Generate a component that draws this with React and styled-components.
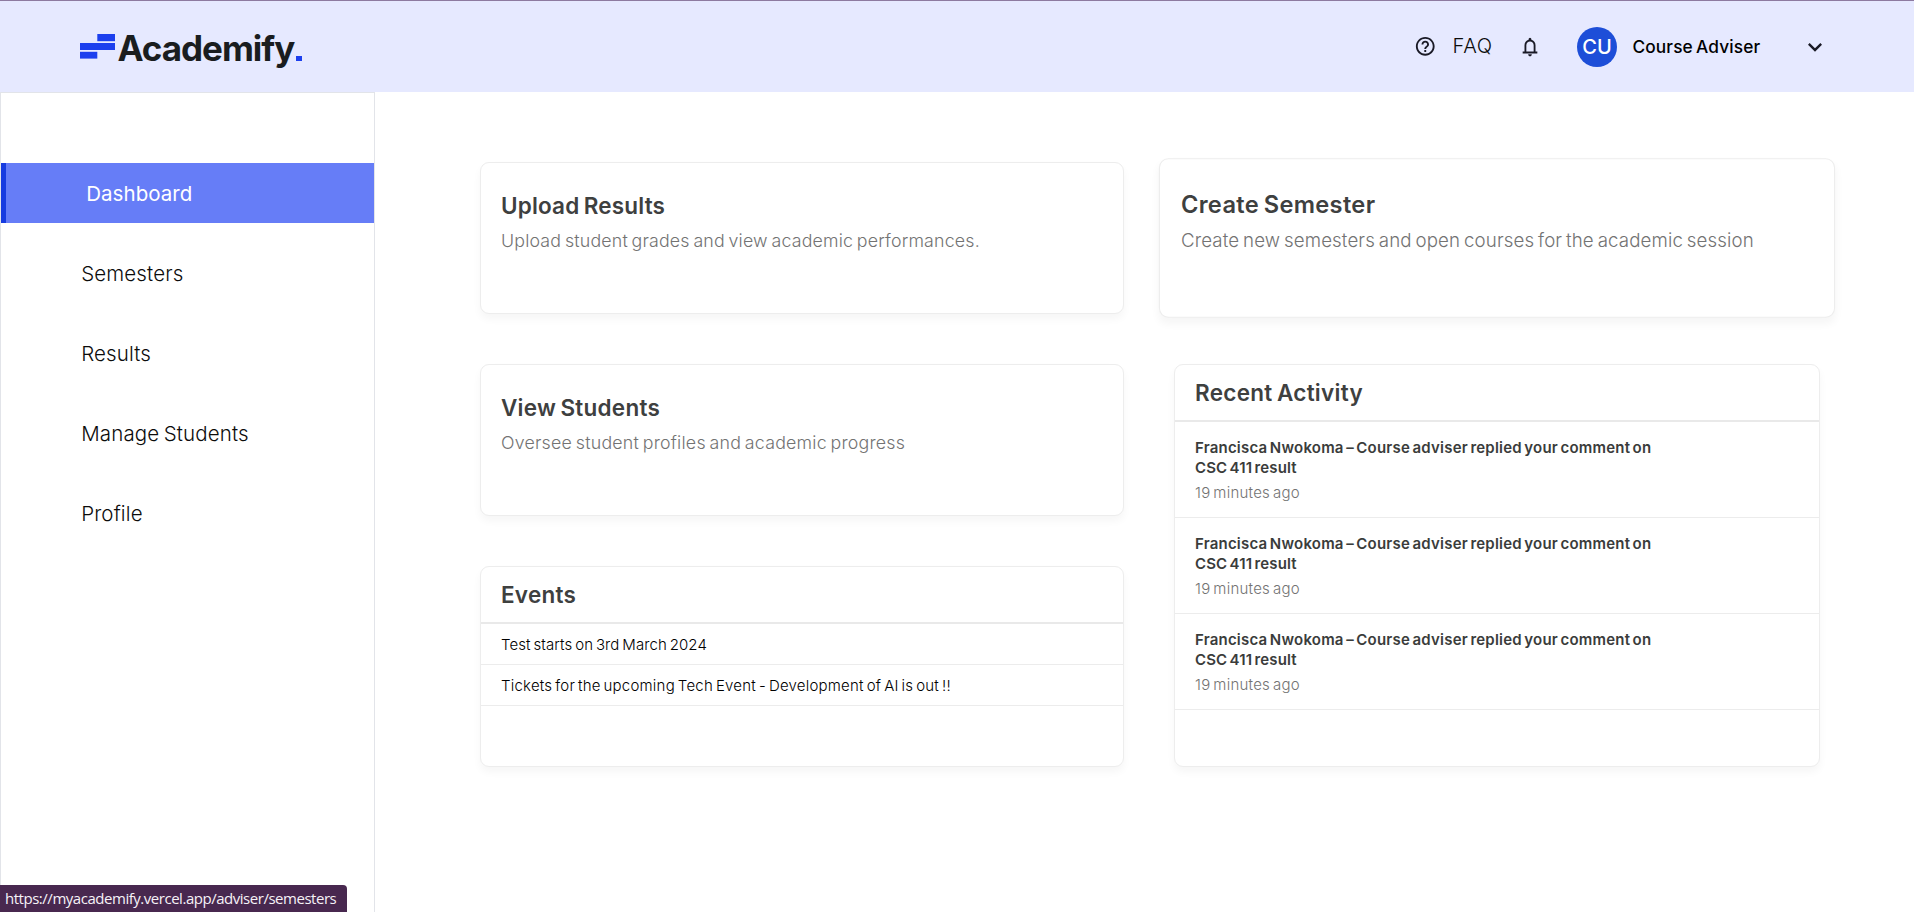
import React from 'react';
import styled, { createGlobalStyle, css } from 'styled-components';
import { MdHelpOutline, MdExpandMore } from 'react-icons/md';

const GlobalStyle = createGlobalStyle`
  *, *::before, *::after { box-sizing: border-box; }
  body {
    margin: 0;
    background: #fff;
    color: #0c0c0c;
    font-family: Inter, "Liberation Sans", sans-serif;
    word-spacing: -1.5px;
    overflow: hidden;
  }
  h1, h2, h3, p, ul { margin: 0; padding: 0; list-style: none; }
`;

const Page = styled.div`
  display: flex;
  flex-direction: column;
  height: 100vh;
`;

const Header = styled.header`
  display: flex;
  align-items: center;
  justify-content: space-between;
  flex: none;
  height: 92px;
  padding: 0 85px 0 80px;
  border-top: 1px solid #8d7aa0;
  background: #e6e9ff;
`;

const Logo = styled.div`
  display: flex;
  align-items: center;
  color: #1a1d1f;

  svg { display: block; }
`;

const Wordmark = styled.span`
  margin: 3px 0 0 2.5px;
  font-size: 35px;
  line-height: 42px;
  font-weight: 700;
  letter-spacing: -1.02px;
`;

const Dot = styled.span`
  align-self: flex-end;
  width: 5.5px;
  height: 5.5px;
  margin: 0 0 8px 2px;
  background: #1c3fee;
`;

const HeaderTools = styled.div`
  display: flex;
  align-items: center;
  color: #1a1a26;

  svg { display: block; flex: none; }
`;

const FaqLabel = styled.span`
  width: 66.5px;
  margin: -2px 0 0 16.5px;
  color: #0c0c0c;
  font-size: 20.2px;
  line-height: 24px;
  font-weight: 300;
  letter-spacing: 0.6px;
`;

const Avatar = styled.span`
  display: flex;
  align-items: center;
  justify-content: center;
  width: 40px;
  height: 40px;
  margin: 1px 15.5px 0 36px;
  border-radius: 50%;
  background: #1d4ed8;
  color: #fff;
  font-size: 20px;
  font-weight: 500;
`;

const UserName = styled.span`
  width: 168.5px;
  color: #000;
  font-size: 17.3px;
  line-height: 24px;
  font-weight: 500;
  letter-spacing: 0.12px;
`;

const Body = styled.div`
  display: flex;
  flex: 1;
  min-height: 0;
`;

const Sidebar = styled.nav`
  display: flex;
  flex-direction: column;
  gap: 20px;
  flex: none;
  width: 375px;
  padding-top: 70px;
  border: 1px solid #e2e4e9;
  border-bottom: 0;
`;

const NavItem = styled.a`
  display: flex;
  align-items: center;
  height: 60px;
  padding: 0 0 0 80.2px;
  font-size: 20.5px;
  font-weight: 300;
  letter-spacing: 0.14px;

  ${({ $active }) => $active && css`
    padding-top: 1px;
    border-left: 5px solid #173be0;
    background: #667df7;
    color: #fff;
    font-weight: 400;
    letter-spacing: 0.05px;
  `}
`;

const Main = styled.main`
  display: grid;
  grid-template-columns: 644px 646px;
  grid-template-rows: 152px 152px 201px;
  gap: 50px;
  flex: 1;
  padding: 70px 0 0 105px;
`;

const Card = styled.section`
  border: 1px solid #ededed;
  border-radius: 9px;
  background: #fff;
  box-shadow: 0 5px 8px rgba(0, 0, 0, 0.04);
`;

const LinkCard = styled(Card)`
  padding: 28.5px 20px 0;

  ${({ $raised }) => $raised && css`
    justify-self: center;
    width: 644px;
    transform: scale(1.05);
  `}
`;

const ActivityCard = styled(Card)`
  grid-column: 2;
  grid-row: 2 / span 2;
`;

const CardTitle = styled.h2`
  color: #3e403f;
  font-size: 22.5px;
  line-height: 28px;
  font-weight: 600;
  letter-spacing: ${({ $tracking = 0.24 }) => $tracking}px;
`;

const CardText = styled.p`
  margin-top: 9px;
  color: #737373;
  font-size: 17.8px;
  line-height: 24px;
  font-weight: 300;
  letter-spacing: ${({ $tracking }) => $tracking}px;
  white-space: nowrap;
`;

const CardHeader = styled.div`
  display: flex;
  align-items: center;
  height: 57px;
  padding: 0 20px;
  border-bottom: 2px solid #e9e9e9;
`;

const EventRow = styled.li`
  display: flex;
  align-items: center;
  height: 41px;
  padding: 0 20px;
  border-bottom: 1px solid #ececec;
  color: #000;
  font-size: 15px;
  font-weight: 300;
  letter-spacing: ${({ $tracking }) => $tracking}px;
`;

const ActivityRow = styled.li`
  height: 96px;
  padding: 16px 20px 0;
  border-bottom: 1px solid #ececec;
`;

const ActivityText = styled.p`
  width: 480px;
  color: #3a3c3b;
  font-size: 15px;
  line-height: 20px;
  font-weight: 600;
  letter-spacing: 0.21px;
`;

const CourseCode = styled.span`
  display: block;
  letter-spacing: 0.12px;
`;

const ActivityTime = styled.p`
  margin-top: 5px;
  color: #737373;
  font-size: 15px;
  line-height: 20px;
  font-weight: 300;
  letter-spacing: 0.24px;
`;

const StatusBar = styled.div`
  position: fixed;
  left: 0;
  bottom: 0;
  width: 347px;
  height: 27px;
  padding-left: 5px;
  border-top-right-radius: 4px;
  background: #48284f;
  color: #f6f2f7;
  font: 15px/27px "Open Sans", sans-serif;
  letter-spacing: -0.47px;
  white-space: nowrap;
`;

function LogoMark() {
  return (
    <svg width="35" height="25" viewBox="0 0 35 25" fill="#1c3fee">
      <rect x="17.3" y="0" width="17.7" height="7.2" />
      <rect x="0" y="9" width="35" height="7" />
      <rect x="0" y="17.8" width="17.3" height="6.8" />
    </svg>
  );
}

function BellIcon() {
  return (
    <svg width="22" height="22" viewBox="0 0 24 24" fill="currentColor">
      <path d="M4 19v-2h2v-7q0-2.075 1.25-3.687T10.5 4.2v-.7q0-.625.438-1.062T12 2t1.063.438T13.5 3.5v.7q2 .5 3.25 2.113T18 10v7h2v2zm8 3q-.825 0-1.412-.587T10 20h4q0 .825-.587 1.413T12 22m-4-5h8v-7q0-1.65-1.175-2.825T12 6T9.175 7.175T8 10z" />
    </svg>
  );
}

const navItems = ['Dashboard', 'Semesters', 'Results', 'Manage Students', 'Profile'];

const events = [
  { text: 'Test starts on 3rd March 2024', tracking: 0.1 },
  { text: 'Tickets for the upcoming Tech Event - Development of AI is out !!', tracking: 0.22 },
];

const activities = [1, 2, 3].map((id) => ({
  id,
  text: 'Francisca Nwokoma – Course adviser replied your comment on',
  course: 'CSC 411 result',
  time: '19 minutes ago',
}));

export default function App() {
  return (
    <Page>
      <GlobalStyle />
      <Header>
        <Logo>
          <LogoMark />
          <Wordmark>Academify</Wordmark>
          <Dot />
        </Logo>
        <HeaderTools>
          <MdHelpOutline size={22.5} />
          <FaqLabel>FAQ</FaqLabel>
          <BellIcon />
          <Avatar>CU</Avatar>
          <UserName>Course Adviser</UserName>
          <MdExpandMore size={28} />
        </HeaderTools>
      </Header>
      <Body>
        <Sidebar>
          {navItems.map((label, i) => (
            <NavItem key={label} $active={i === 0}>{label}</NavItem>
          ))}
        </Sidebar>
        <Main>
          <LinkCard>
            <CardTitle $tracking={0.17}>Upload Results</CardTitle>
            <CardText $tracking={0.18}>Upload student grades and view academic performances.</CardText>
          </LinkCard>
          <LinkCard $raised>
            <CardTitle $tracking={0.31}>Create Semester</CardTitle>
            <CardText $tracking={0.13}>Create new semesters and open courses for the academic session</CardText>
          </LinkCard>
          <LinkCard>
            <CardTitle>View Students</CardTitle>
            <CardText $tracking={0.22}>Oversee student profiles and academic progress</CardText>
          </LinkCard>
          <ActivityCard>
            <CardHeader><CardTitle $tracking={0.28}>Recent Activity</CardTitle></CardHeader>
            <ul>
              {activities.map(({ id, text, course, time }) => (
                <ActivityRow key={id}>
                  <ActivityText>{text} <CourseCode>{course}</CourseCode></ActivityText>
                  <ActivityTime>{time}</ActivityTime>
                </ActivityRow>
              ))}
            </ul>
          </ActivityCard>
          <Card>
            <CardHeader><CardTitle>Events</CardTitle></CardHeader>
            <ul>
              {events.map(({ text, tracking }) => (
                <EventRow key={text} $tracking={tracking}>{text}</EventRow>
              ))}
            </ul>
          </Card>
        </Main>
      </Body>
      <StatusBar>https://myacademify.vercel.app/adviser/semesters</StatusBar>
    </Page>
  );
}
